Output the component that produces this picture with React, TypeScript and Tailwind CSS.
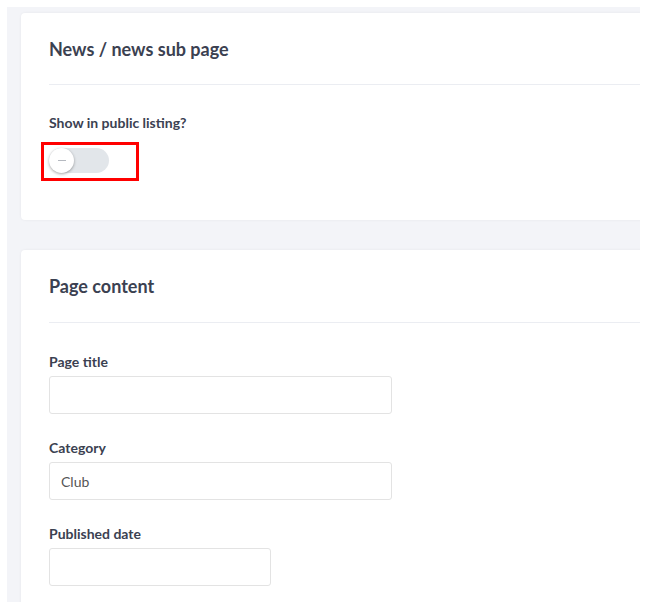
import React from "react";

const font = { fontFamily: "Lato, 'Noto Sans', sans-serif" };

function Field({ label, value, width, first }: { label: string; value?: string; width: string; first?: boolean }) {
  return (
    <div className={first ? "mt-[29px]" : "mt-[24px]"}>
      <div className="text-[14px] leading-5 font-bold text-[#3b4151] mb-[4px]">{label}</div>
      <div
        className={`${width} h-[38px] rounded-[3px] border border-[#e3e3e3] bg-white flex items-center px-[11px] text-[14px] text-[#555]`}
      >
        {value}
      </div>
    </div>
  );
}

export default function App() {
  return (
    <div className="h-[602px] w-[653px] bg-white pt-[7px] pl-[7px] overflow-hidden" style={font}>
      <div className="w-[633px] h-[595px] bg-[#f3f4f8] overflow-hidden pl-[14px] pt-[6px]">
        <div className="w-[700px] bg-white rounded-[4px] shadow-[0_0_3px_rgba(0,0,0,0.06)] pl-[28px] pt-[22px] pb-[47px]">
          <h2 className="text-[18px] leading-[28px] font-bold text-[#3b4151]">News / news sub page</h2>
          <div className="mt-[21px] h-px bg-[#ebedf2]" />
          <div className="mt-[28px] text-[14px] leading-5 font-bold text-[#3b4151]">Show in public listing?</div>
          <div className="relative mt-[15px] w-[60px] h-[25px]">
            <div className="w-[60px] h-[25px] rounded-full bg-[#e2e6ea]" />
            <div className="absolute left-0 top-0 w-[25px] h-[25px] rounded-full bg-white shadow-[0_1px_3px_rgba(0,0,0,0.35)] flex items-center justify-center">
              <div className="w-[8px] h-[1.5px] bg-[#b5b9c0]" />
            </div>
            <div className="absolute left-[-8px] top-[-6px] w-[98px] h-[39px] border-[3px] border-[#ff0000]" />
          </div>
        </div>

        <div className="mt-[30px] w-[700px] bg-white rounded-[4px] shadow-[0_0_3px_rgba(0,0,0,0.06)] pl-[28px] pt-[22px] pb-[40px]">
          <h2 className="text-[18px] leading-[28px] font-bold text-[#3b4151]">Page content</h2>
          <div className="mt-[22px] h-px bg-[#ebedf2]" />
          <Field first label="Page title" width="w-[343px]" />
          <Field label="Category" value="Club" width="w-[343px]" />
          <Field label="Published date" width="w-[222px]" />
        </div>
      </div>
    </div>
  );
}
